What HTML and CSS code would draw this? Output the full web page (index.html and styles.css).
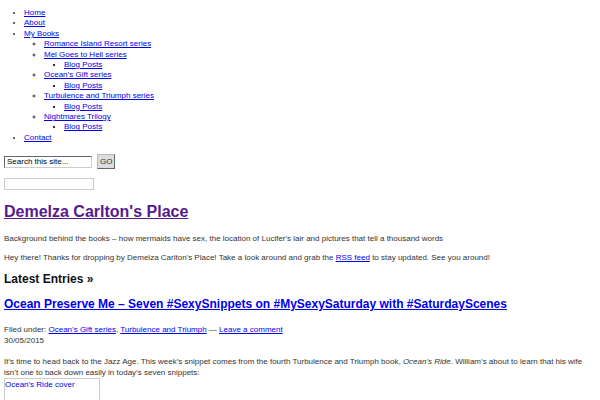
FILE: index.html
```html
<!DOCTYPE html>
<html lang="en">
<head>
  <meta charset="UTF-8">
  <title>Demelza Carlton's Place</title>
  <link rel="stylesheet" href="styles.css">
</head>
<body>
  <ul class="menu">
    <li><a href="#">Home</a></li>
    <li><a href="#">About</a></li>
    <li><a href="#">My Books</a>
      <ul>
        <li><a href="#">Romance Island Resort series</a></li>
        <li><a href="#">Mel Goes to Hell series</a>
          <ul><li><a href="#">Blog Posts</a></li></ul>
        </li>
        <li><a href="#">Ocean’s Gift series</a>
          <ul><li><a href="#">Blog Posts</a></li></ul>
        </li>
        <li><a href="#">Turbulence and Triumph series</a>
          <ul><li><a href="#">Blog Posts</a></li></ul>
        </li>
        <li><a href="#">Nightmares Trilogy</a>
          <ul><li><a href="#">Blog Posts</a></li></ul>
        </li>
      </ul>
    </li>
    <li><a href="#">Contact</a></li>
  </ul>

  <form class="search">
    <input type="text" class="search-field" value="Search this site...">
    <button type="button" class="search-go">GO</button>
  </form>
  <div class="extra"><input type="text" class="extra-field"></div>

  <h1 class="site-title"><a href="#">Demelza Carlton's Place</a></h1>
  <p class="tagline">Background behind the books – how mermaids have sex, the location of Lucifer's lair and pictures that tell a thousand words</p>
  <p class="welcome">Hey there! Thanks for dropping by Demelza Carlton's Place! Take a look around and grab the <a href="#">RSS feed</a> to stay updated. See you around!</p>

  <h2 class="section-title">Latest Entries »</h2>

  <div class="post">
    <h3 class="post-title"><a href="#">Ocean Preserve Me – Seven #SexySnippets on #MySexySaturday with #SaturdayScenes</a></h3>
    <p class="post-meta">Filed under: <a href="#">Ocean’s Gift series</a>, <a href="#">Turbulence and Triumph</a> — <a href="#">Leave a comment</a><br>30/05/2015</p>
    <p class="post-text">It’s time to head back to the Jazz Age. This week’s snippet comes from the fourth Turbulence and Triumph book, <em>Ocean’s Ride</em>. William’s about to learn that his wife isn’t one to back down easily in today’s seven snippets:</p>
    <div class="cover"><a href="#">Ocean's Ride cover</a></div>
  </div>
</body>
</html>
```

FILE: styles.css
```css
body {
  font-family: "Liberation Sans", Arial, sans-serif;
  font-size: 8px;
  line-height: 11px;
  color: #333;
  background: #fff;
  margin: 4px;
}
a {
  color: #0000ee;
}
.menu {
  margin: 4px 0 0;
  padding-left: 20px;
  line-height: 10.4px;
}
.menu ul {
  margin: 0;
  padding-left: 20px;
}
.search {
  margin-top: 11px;
  display: flex;
  align-items: center;
  gap: 5px;
}
.search-field {
  width: 82px;
  height: 8px;
  padding: 1px 2px;
  font: 8px "Liberation Sans", Arial, sans-serif;
  color: #000;
  border: 1px solid #666;
  border-right-color: #ccc;
  border-bottom-color: #ccc;
}
.search-go {
  height: 15px;
  padding: 0 2px;
  font: 8px "Liberation Sans", Arial, sans-serif;
  color: #333;
  background: #ddd;
  border: 1px solid #bbb;
  border-right-color: #666;
  border-bottom-color: #666;
}
.extra {
  margin-top: 9px;
  line-height: 0;
}
.extra-field {
  width: 84px;
  height: 8px;
  padding: 1px 2px;
  border: 1px solid #ccc;
}
.site-title {
  font-size: 16px;
  line-height: 22px;
  margin: 11px 0 0;
}
.site-title a {
  color: #551a8b;
}
.tagline {
  margin: 10px 0 0;
}
.welcome {
  margin: 8px 0 0;
}
.section-title {
  font-size: 12px;
  line-height: 16px;
  color: #111;
  margin: 8px 0 0;
}
.post-title {
  font-size: 12px;
  line-height: 16px;
  margin: 9px 0 0;
}
.post-meta {
  margin: 12px 0 0;
}
.post-text {
  margin: 10px 0 0;
}
.cover {
  width: 94px;
  height: 40px;
  border: 1px solid #ccc;
}
.cover a {
  text-decoration: none;
}
```
